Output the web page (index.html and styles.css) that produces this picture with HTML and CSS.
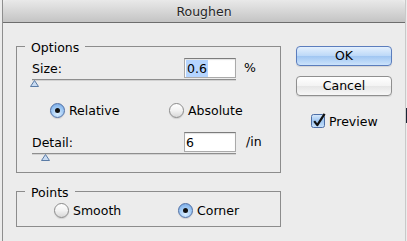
FILE: index.html
```html
<!DOCTYPE html>
<html>
<head>
<meta charset="utf-8">
<link rel="stylesheet" href="styles.css">
</head>
<body>
<div class="window">
  <div class="titlebar">Roughen</div>
  <div class="content">
    <div class="left">
      <div class="group options">
        <span class="group-title">Options</span>
        <div class="slider">
          <div class="slider-main">
            <div class="slider-row"><span class="label">Size:</span><span class="field"><span class="sel">0.6</span></span></div>
            <div class="track"></div>
            <div class="thumb-row"><svg class="thumb" style="margin-left:-2px" viewBox="0 0 9 7"><polygon points="4.5,0.5 8.5,6.5 0.5,6.5"/></svg></div>
          </div>
          <span class="unit unit-pct">%</span>
        </div>
        <div class="radio-row opt-radios">
          <div class="radio-item"><span class="radio on"></span>Relative</div>
          <div class="radio-item"><span class="radio"></span>Absolute</div>
        </div>
        <div class="slider detail">
          <div class="slider-main">
            <div class="slider-row"><span class="label">Detail:</span><span class="field">6</span></div>
            <div class="track"></div>
            <div class="thumb-row"><svg class="thumb" style="margin-left:9px" viewBox="0 0 9 7"><polygon points="4.5,0.5 8.5,6.5 0.5,6.5"/></svg></div>
          </div>
          <span class="unit unit-in">/in</span>
        </div>
      </div>
      <div class="group points">
        <span class="group-title">Points</span>
        <div class="radio-row pt-radios">
          <div class="radio-item"><span class="radio"></span>Smooth</div>
          <div class="radio-item"><span class="radio on"></span>Corner</div>
        </div>
      </div>
    </div>
    <div class="right">
      <div class="btn default">OK</div>
      <div class="btn">Cancel</div>
      <div class="check">
        <svg class="checkbox" viewBox="0 0 16 16" width="16" height="16">
          <defs>
            <linearGradient id="cb" x1="0" y1="0" x2="0" y2="1">
              <stop offset="0" stop-color="#d9eafc"/>
              <stop offset="0.5" stop-color="#9fc6f1"/>
              <stop offset="1" stop-color="#c9e2fb"/>
            </linearGradient>
          </defs>
          <rect x="0.5" y="1.5" width="13" height="13" rx="2" fill="url(#cb)" stroke="#4d6ea6"/>
          <path d="M3.2 8.2 L6.3 12.2 L13.6 0.8" fill="none" stroke="#111" stroke-width="2.2" stroke-linejoin="round"/>
        </svg>
        <span>Preview</span>
      </div>
    </div>
  </div>
</div>
<div class="edge"></div>
</body>
</html>
```
FILE: styles.css
```css
body {
  margin: 0;
  width: 407px;
  height: 241px;
  overflow: hidden;
  display: flex;
  align-items: flex-start;
  background: #ececec;
  font-family: "DejaVu Sans", "Liberation Sans", sans-serif;
  font-size: 12.5px;
  color: #000;
}

.window {
  margin-left: 2px;
  width: 402px;
  height: 241px;
  border-left: 1px solid #8e8e8e;
  border-right: 1px solid #c9c9c9;
  background: #ececec;
}

.titlebar {
  height: 21px;
  padding-top: 1px;
  line-height: 22px;
  text-align: center;
  color: #262626;
  text-shadow: 0 1px 0 rgba(255, 255, 255, 0.5);
  background: linear-gradient(#e9e9e9, #d3d3d3 60%, #c4c4c4);
  border-bottom: 1px solid #6d6d6d;
  border-radius: 5px 5px 0 0;
}

.content {
  display: flex;
  gap: 15px;
  padding: 23px 0 0 13px;
}

.left {
  width: 265px;
}

.group {
  position: relative;
  border: 1px solid #8c8c8c;
}

.options {
  padding: 11px 0 11px 15px;
}

.points {
  margin-top: 18px;
  padding: 11px 0 8px 37px;
}

.group-title {
  position: absolute;
  top: -7px;
  left: 8px;
  padding: 0 6px;
  line-height: 15px;
  background: #ececec;
}

.slider {
  display: flex;
  align-items: flex-start;
}

.slider.detail {
  margin-top: 14px;
}

.slider-main {
  width: 204px;
}

.slider-row {
  display: flex;
  justify-content: space-between;
  align-items: center;
  height: 20px;
}

.label {
  line-height: 15px;
}

.field {
  width: 52px;
  height: 20px;
  box-sizing: border-box;
  border: 1px solid #aaaaaa;
  border-top-color: #7c7c7c;
  background: #fff;
  padding: 1px 0 0 1px;
  line-height: 17px;
  box-shadow: inset 0 1px 1px rgba(0, 0, 0, 0.12);
}

.sel {
  display: inline-block;
  background: #b5d5ff;
  padding: 0 1px;
}

.track {
  margin-top: 1px;
  height: 1px;
  background: #8e8e8e;
  box-shadow: 0 1px 0 #d2d2d2;
}

.thumb-row {
  height: 7px;
}

.thumb {
  display: block;
  width: 9px;
  height: 7px;
  fill: #c8dbf2;
  stroke: #5b7ca6;
  stroke-width: 1;
}

.unit {
  height: 20px;
  line-height: 20px;
}

.unit-pct {
  margin-left: 8px;
}

.unit-in {
  margin-left: 10px;
}

.radio-row {
  display: grid;
}

.opt-radios {
  margin-top: 16px;
  padding-left: 18px;
  grid-template-columns: 119px auto;
}

.pt-radios {
  grid-template-columns: 124px auto;
}

.radio-item {
  display: flex;
  align-items: center;
  gap: 4px;
  line-height: 15px;
}

.radio {
  position: relative;
  width: 15px;
  height: 15px;
  box-sizing: border-box;
  border-radius: 50%;
  border: 1px solid #8b8b8b;
  background: linear-gradient(#ffffff, #f2f2f2 50%, #d8d8d8);
  box-shadow: 0 1px 1px rgba(0, 0, 0, 0.12);
}

.radio.on {
  border-color: #4f6fa5;
  background: radial-gradient(circle at 50% 75%, #dcefff 0, #9cc6f3 55%, #6a9fe0 100%);
}

.radio.on::after {
  content: "";
  position: absolute;
  left: 4px;
  top: 4px;
  width: 5px;
  height: 5px;
  border-radius: 50%;
  background: #111;
}

.right {
  display: flex;
  flex-direction: column;
  align-items: flex-start;
}

.btn {
  width: 96px;
  height: 20px;
  box-sizing: border-box;
  margin-bottom: 10px;
  border: 1px solid #8f8f8f;
  border-radius: 4px;
  text-align: center;
  line-height: 18px;
  background: linear-gradient(#ffffff, #f3f3f3 50%, #e6e6e6 51%, #f7f7f7);
  box-shadow: 0 1px 1px rgba(0, 0, 0, 0.1);
}

.btn.default {
  border-color: #5b7dbd;
  background: linear-gradient(#e4f0fd, #bcd8f8 50%, #a0c6f2 51%, #cce3fb);
}

.check {
  margin-top: 7px;
  margin-left: 15px;
  display: flex;
  align-items: center;
  gap: 2px;
  line-height: 15px;
}

.checkbox {
  display: block;
}

.edge {
  width: 1px;
  height: 15px;
  margin-top: 108px;
  background: #1b2535;
}
```
